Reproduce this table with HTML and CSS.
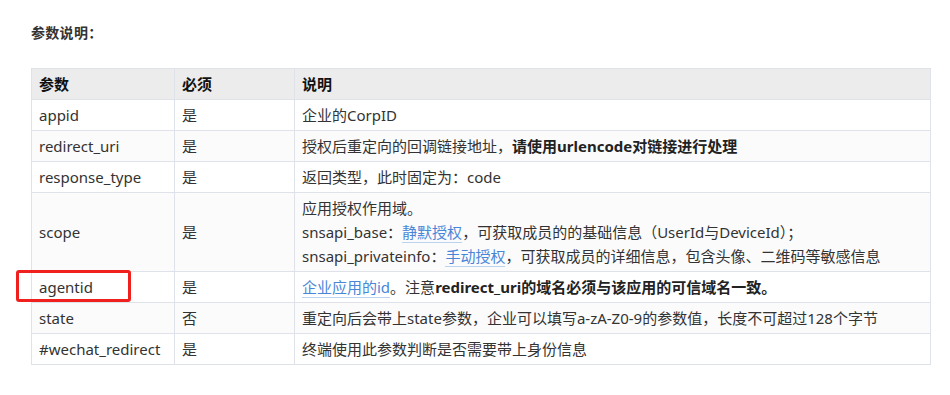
FILE: index.html
```html
<!DOCTYPE html>
<html lang="zh-CN">
<head>
<meta charset="utf-8">
<link rel="stylesheet" href="styles.css">
</head>
<body>
<div class="page">
  <p class="title">参数说明：</p>
  <table class="params">
    <colgroup><col class="c1"><col class="c2"><col class="c3"></colgroup>
    <thead>
      <tr><th>参数</th><th>必须</th><th>说明</th></tr>
    </thead>
    <tbody>
      <tr><td>appid</td><td>是</td><td>企业的CorpID</td></tr>
      <tr><td>redirect_uri</td><td>是</td><td>授权后重定向的回调链接地址，<strong>请使用urlencode对链接进行处理</strong></td></tr>
      <tr><td>response_type</td><td>是</td><td>返回类型，此时固定为：code</td></tr>
      <tr><td>scope</td><td>是</td><td>应用授权作用域。<br>snsapi_base：<a href="#">静默授权</a>，可获取成员的的基础信息（UserId与DeviceId）；<br>snsapi_privateinfo：<a href="#">手动授权</a>，可获取成员的详细信息，包含头像、二维码等敏感信息</td></tr>
      <tr><td class="mark">agentid<span class="hl"></span></td><td>是</td><td><a href="#">企业应用的id</a>。注意<strong>redirect_uri的域名必须与该应用的可信域名一致。</strong></td></tr>
      <tr><td>state</td><td>否</td><td>重定向后会带上state参数，企业可以填写a-zA-Z0-9的参数值，长度不可超过128个字节</td></tr>
      <tr><td>#wechat_redirect</td><td>是</td><td>终端使用此参数判断是否需要带上身份信息</td></tr>
    </tbody>
  </table>
</div>
</body>
</html>
```

FILE: styles.css
```css
html, body {
  margin: 0;
  padding: 0;
  background: #fff;
}
body {
  font-family: "Noto Sans", "Noto Sans CJK SC", sans-serif;
  font-size: 15px;
  color: #333;
}
.page {
  padding: 23px 19px 0 31px;
}
.title {
  margin: 0 0 25px 0;
  font-size: 14px;
  letter-spacing: 0.3px;
  font-weight: bold;
  line-height: 20px;
  color: #333;
}
.params {
  width: 900px;
  border-collapse: collapse;
  table-layout: fixed;
}
.c1 { width: 143px; }
.c2 { width: 120px; }
.params th,
.params td {
  border: 1px solid #dfe2e8;
  padding: 3px 7px 3px 7px;
  line-height: 24px;
  text-align: left;
  vertical-align: middle;
}
.params th {
  background: #ececec;
  color: #111;
  font-weight: bold;
  height: 24px;
}
.params tbody tr:nth-child(even) td {
  background: #fbfbfc;
}
.params strong {
  color: #222;
}
.params a {
  color: #4a86d8;
  text-decoration: none;
  border-bottom: 1px solid #bcd3f0;
}
.mark {
  position: relative;
}
.hl {
  position: absolute;
  left: -16px;
  top: -2px;
  width: 109px;
  height: 26px;
  border: 3px solid #f0201f;
  border-radius: 3px;
}
```
